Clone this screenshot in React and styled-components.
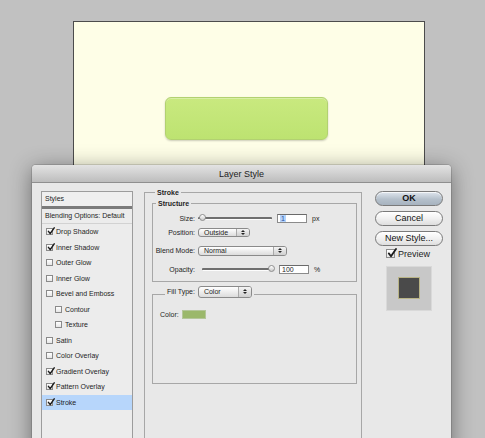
import styled, { createGlobalStyle } from "styled-components";

const GlobalStyle = createGlobalStyle`
  html, body {
    margin: 0;
    padding: 0;
  }
  body {
    background: #c1c1c1;
    font-family: "Liberation Sans", Arial, sans-serif;
    color: #1e1e1e;
    overflow: hidden;
  }
`;

const styleItems = [
  { label: "Drop Shadow", checked: true },
  { label: "Inner Shadow", checked: true },
  { label: "Outer Glow" },
  { label: "Inner Glow" },
  { label: "Bevel and Emboss" },
  { label: "Contour", indent: 1 },
  { label: "Texture", indent: 1 },
  { label: "Satin" },
  { label: "Color Overlay" },
  { label: "Gradient Overlay", checked: true },
  { label: "Pattern Overlay", checked: true },
  { label: "Stroke", checked: true, selected: true },
];

function Check({ checked, size = 7 }) {
  return (
    <CheckBox $size={size}>
      {checked && (
        <svg viewBox="0 0 10 10" width={size + 1} height={size + 1}>
          <path
            d="M1.8 5.4 L4 8.3 L9 1"
            fill="none"
            stroke="#1c1c1c"
            strokeWidth="1.8"
            strokeLinecap="round"
            strokeLinejoin="round"
          />
        </svg>
      )}
    </CheckBox>
  );
}

function Select({ value, width, height = 9 }) {
  return (
    <SelectBox $width={width} $height={height}>
      <SelectText>{value}</SelectText>
      <SelectArrows>
        <Arrow $up />
        <Arrow />
      </SelectArrows>
    </SelectBox>
  );
}

function App() {
  return (
    <>
      <GlobalStyle />
      <Desktop>
        <Canvas>
          <GreenButton />
        </Canvas>

        <Dialog>
          <TitleBar>Layer Style</TitleBar>
          <Body>
            <StylesList>
              <ListHeader>Styles</ListHeader>
              <BlendRow>Blending Options: Default</BlendRow>
              {styleItems.map((item) => (
                <StyleRow
                  key={item.label}
                  $indent={item.indent || 0}
                  $selected={item.selected}
                >
                  <Check checked={item.checked} />
                  <span>{item.label}</span>
                </StyleRow>
              ))}
            </StylesList>

            <Main>
              <OuterSet>
                <Legend>Stroke</Legend>
                <InnerSet>
                  <Legend>Structure</Legend>
                  <FieldRow $top={0}>
                    <FieldLabel>Size:</FieldLabel>
                    <Controls>
                      <Slider $width={74}>
                        <Thumb style={{ left: 1 }} />
                      </Slider>
                      <NumberInput>
                        <Selected>1</Selected>
                      </NumberInput>
                      <Unit>px</Unit>
                    </Controls>
                  </FieldRow>
                  <FieldRow $top={4.6}>
                    <FieldLabel>Position:</FieldLabel>
                    <Select value="Outside" width={52} />
                  </FieldRow>
                  <FieldRow $top={8}>
                    <FieldLabel>Blend Mode:</FieldLabel>
                    <Select value="Normal" width={89} height={10} />
                  </FieldRow>
                  <FieldRow $top={9.2}>
                    <FieldLabel>Opacity:</FieldLabel>
                    <Controls>
                      <Slider $width={72} $offset={4}>
                        <Thumb style={{ left: 66 }} />
                      </Slider>
                      <NumberInput>100</NumberInput>
                      <Unit>%</Unit>
                    </Controls>
                  </FieldRow>
                </InnerSet>

                <FillSet>
                  <FillLegend>
                    <span>Fill Type:</span>
                    <Select value="Color" width={54} height={12} />
                  </FillLegend>
                  <ColorRow>
                    <span>Color:</span>
                    <Swatch />
                  </ColorRow>
                </FillSet>
              </OuterSet>
            </Main>

            <Side>
              <PillButton $primary>OK</PillButton>
              <PillButton>Cancel</PillButton>
              <PillButton>New Style...</PillButton>
              <PreviewRow>
                <Check checked size={9} />
                <span>Preview</span>
              </PreviewRow>
              <PreviewBox>
                <PreviewSquare />
              </PreviewBox>
            </Side>
          </Body>
        </Dialog>
      </Desktop>
    </>
  );
}

const Desktop = styled.div`
  position: relative;
  width: 485px;
  height: 438px;
  overflow: hidden;
  padding-top: 21px;
  box-sizing: border-box;
`;

const Canvas = styled.div`
  margin-left: 73px;
  width: 352px;
  height: 300px;
  box-sizing: border-box;
  border: 1px solid #4c4c4c;
  background: #fefee7;
  padding: 75px 0 0 91px;
`;

const GreenButton = styled.div`
  width: 163px;
  height: 43px;
  box-sizing: border-box;
  border-radius: 6px;
  border: 1px solid #b2d171;
  background: linear-gradient(#c9e97f, #bde371);
  box-shadow: 0 1px 2px rgba(0, 0, 0, 0.2),
    inset 0 1px 0 rgba(255, 255, 255, 0.3);
`;

/* the dialog floats over the desktop like a window */
const Dialog = styled.div`
  position: absolute;
  left: 32px;
  top: 165px;
  width: 419px;
  height: 290px;
  background: #e8e8e8;
  border-radius: 4px 4px 0 0;
  box-shadow: 0 4px 22px rgba(0, 0, 0, 0.45), 0 0 0 1px rgba(0, 0, 0, 0.12);
`;

const TitleBar = styled.div`
  height: 18px;
  line-height: 18px;
  box-sizing: border-box;
  text-align: center;
  font-size: 9px;
  color: #222;
  background: linear-gradient(#e3e3e3, #bdbdbd);
  border-bottom: 1px solid #8f8f8f;
  border-radius: 4px 4px 0 0;
`;

const Body = styled.div`
  display: grid;
  grid-template-columns: 92px 242px 68px;
  align-items: start;
  padding: 8px 8px 0 9px;
`;

const StylesList = styled.div`
  height: 270px;
  box-sizing: border-box;
  border: 1px solid #9c9c9c;
  background: #ececec;
  font-size: 7px;
`;

const ListHeader = styled.div`
  height: 14px;
  line-height: 14px;
  padding-left: 3px;
  border-bottom: 3px solid #7b7b7b;
  background: #efefef;
`;

const BlendRow = styled.div`
  height: 14px;
  line-height: 14px;
  padding-left: 3px;
  border-bottom: 1px solid #d2d2d2;
  white-space: nowrap;
`;

const StyleRow = styled.div`
  display: flex;
  align-items: center;
  gap: 3px;
  height: 15.5px;
  padding-left: ${(p) => 4 + p.$indent * 9}px;
  background: ${(p) => (p.$selected ? "#b7d6fb" : "transparent")};
  white-space: nowrap;
`;

const CheckBox = styled.span`
  position: relative;
  display: inline-flex;
  flex: none;
  width: ${(p) => p.$size}px;
  height: ${(p) => p.$size}px;
  box-sizing: border-box;
  border: 1px solid #8a8a8a;
  background: linear-gradient(#ffffff, #e6e6e6);

  svg {
    position: absolute;
    left: 0;
    bottom: -1px;
  }
`;

const Main = styled.div`
  margin: -3px 13px 0 11px;
`;

const OuterSet = styled.fieldset`
  margin: 0;
  min-width: 0;
  height: 280px;
  box-sizing: border-box;
  border: 1px solid #a7a7a7;
  padding: 2px 4px 0 7px;
`;

const Legend = styled.legend`
  font-size: 7px;
  font-weight: bold;
  line-height: 9px;
  padding: 0 2px;
  margin-left: 3px;
`;

const InnerSet = styled.fieldset`
  margin: 0;
  min-width: 0;
  border: 1px solid #a7a7a7;
  padding: 5px 6px 6px 0;
`;

const FieldRow = styled.div`
  display: grid;
  grid-template-columns: 42px auto;
  column-gap: 3px;
  align-items: center;
  height: 10px;
  margin-top: ${(p) => p.$top}px;
  font-size: 7px;
`;

const FieldLabel = styled.span`
  text-align: right;
  white-space: nowrap;
`;

const Controls = styled.div`
  display: flex;
  align-items: center;
`;

const Slider = styled.div`
  position: relative;
  width: ${(p) => p.$width}px;
  margin-left: ${(p) => p.$offset || 0}px;
  height: 3px;
  box-sizing: border-box;
  background: #6f6f6f;
  border-bottom: 1px solid #fdfdfd;
  border-radius: 1px;
`;

const Thumb = styled.span`
  position: absolute;
  top: -3px;
  width: 7px;
  height: 7px;
  border-radius: 50%;
  border: 1px solid #8d8d8d;
  box-sizing: border-box;
  background: linear-gradient(#ffffff, #c9c9c9);
`;

const NumberInput = styled.div`
  width: 30px;
  height: 9px;
  box-sizing: border-box;
  margin-left: 5px;
  border: 1px solid #8b8b8b;
  border-top-color: #6a6a6a;
  background: #fff;
  font-size: 7px;
  line-height: 7px;
  padding-left: 2px;
`;

const Selected = styled.span`
  background: #b5d3fa;
  color: #2a4fa0;
  padding: 0 1px;
`;

const Unit = styled.span`
  margin-left: 5px;
  font-size: 7px;
`;

const SelectBox = styled.div`
  display: flex;
  width: ${(p) => p.$width}px;
  height: ${(p) => p.$height}px;
  box-sizing: border-box;
  border: 1px solid #8a8a8a;
  border-radius: 3px;
  background: linear-gradient(#ffffff, #dcdcdc);
  font-size: 7px;
  font-weight: normal;
  overflow: hidden;
`;

const SelectText = styled.span`
  flex: 1;
  display: flex;
  align-items: center;
  padding-left: 5px;
`;

const SelectArrows = styled.span`
  width: 12px;
  display: flex;
  flex-direction: column;
  align-items: center;
  justify-content: center;
  gap: 1px;
  border-left: 1px solid #a9a9a9;
  background: linear-gradient(#f4f4f4, #cfcfcf);
`;

const Arrow = styled.span`
  width: 0;
  height: 0;
  border-left: 2px solid transparent;
  border-right: 2px solid transparent;
  ${(p) =>
    p.$up ? "border-bottom: 2px solid #222;" : "border-top: 2px solid #222;"}
`;

const FillSet = styled.fieldset`
  margin: 4px 0 0 0;
  min-width: 0;
  height: 98px;
  box-sizing: border-box;
  border: 1px solid #a7a7a7;
  padding: 6px 0 0 7px;
`;

const FillLegend = styled.legend`
  display: flex;
  align-items: center;
  gap: 3px;
  font-size: 7px;
  padding: 0 2px 6px 2px;
  margin-left: 5px;
`;

const ColorRow = styled.div`
  display: flex;
  align-items: center;
  gap: 3px;
  font-size: 7px;
`;

const Swatch = styled.span`
  width: 24px;
  height: 9px;
  background: #9bb86b;
  border: 1px solid #b4c69a;
  box-sizing: border-box;
`;

const Side = styled.div`
  display: flex;
  flex-direction: column;
`;

const PillButton = styled.div`
  height: 14.5px;
  box-sizing: border-box;
  margin-bottom: 5.5px;
  border-radius: 8px;
  border: 1px solid #7a7a7a;
  display: flex;
  align-items: center;
  justify-content: center;
  font-size: 9px;
  font-weight: ${(p) => (p.$primary ? "bold" : "normal")};
  color: #111;
  background: ${(p) =>
    p.$primary
      ? "linear-gradient(#dfe6ee, #b5c0cb 55%, #a7b3bf)"
      : "linear-gradient(#ffffff, #f1f1f1 50%, #dedede)"};
  box-shadow: inset 0 1px 0 rgba(255, 255, 255, 0.7);
`;

const PreviewRow = styled.div`
  display: flex;
  align-items: center;
  gap: 3px;
  margin-top: -2.5px;
  padding-left: 11px;
  height: 10px;
  font-size: 9px;
`;

const PreviewBox = styled.div`
  margin: 7px 0 0 11px;
  width: 46px;
  height: 45px;
  box-sizing: border-box;
  background: #c8c8c8;
  border: 1px solid #d9d9d9;
  display: flex;
  align-items: center;
  justify-content: center;
`;

const PreviewSquare = styled.div`
  width: 22px;
  height: 22px;
  box-sizing: border-box;
  background: #4a4a4a;
  border: 1px solid #b9b486;
`;

export default App;
